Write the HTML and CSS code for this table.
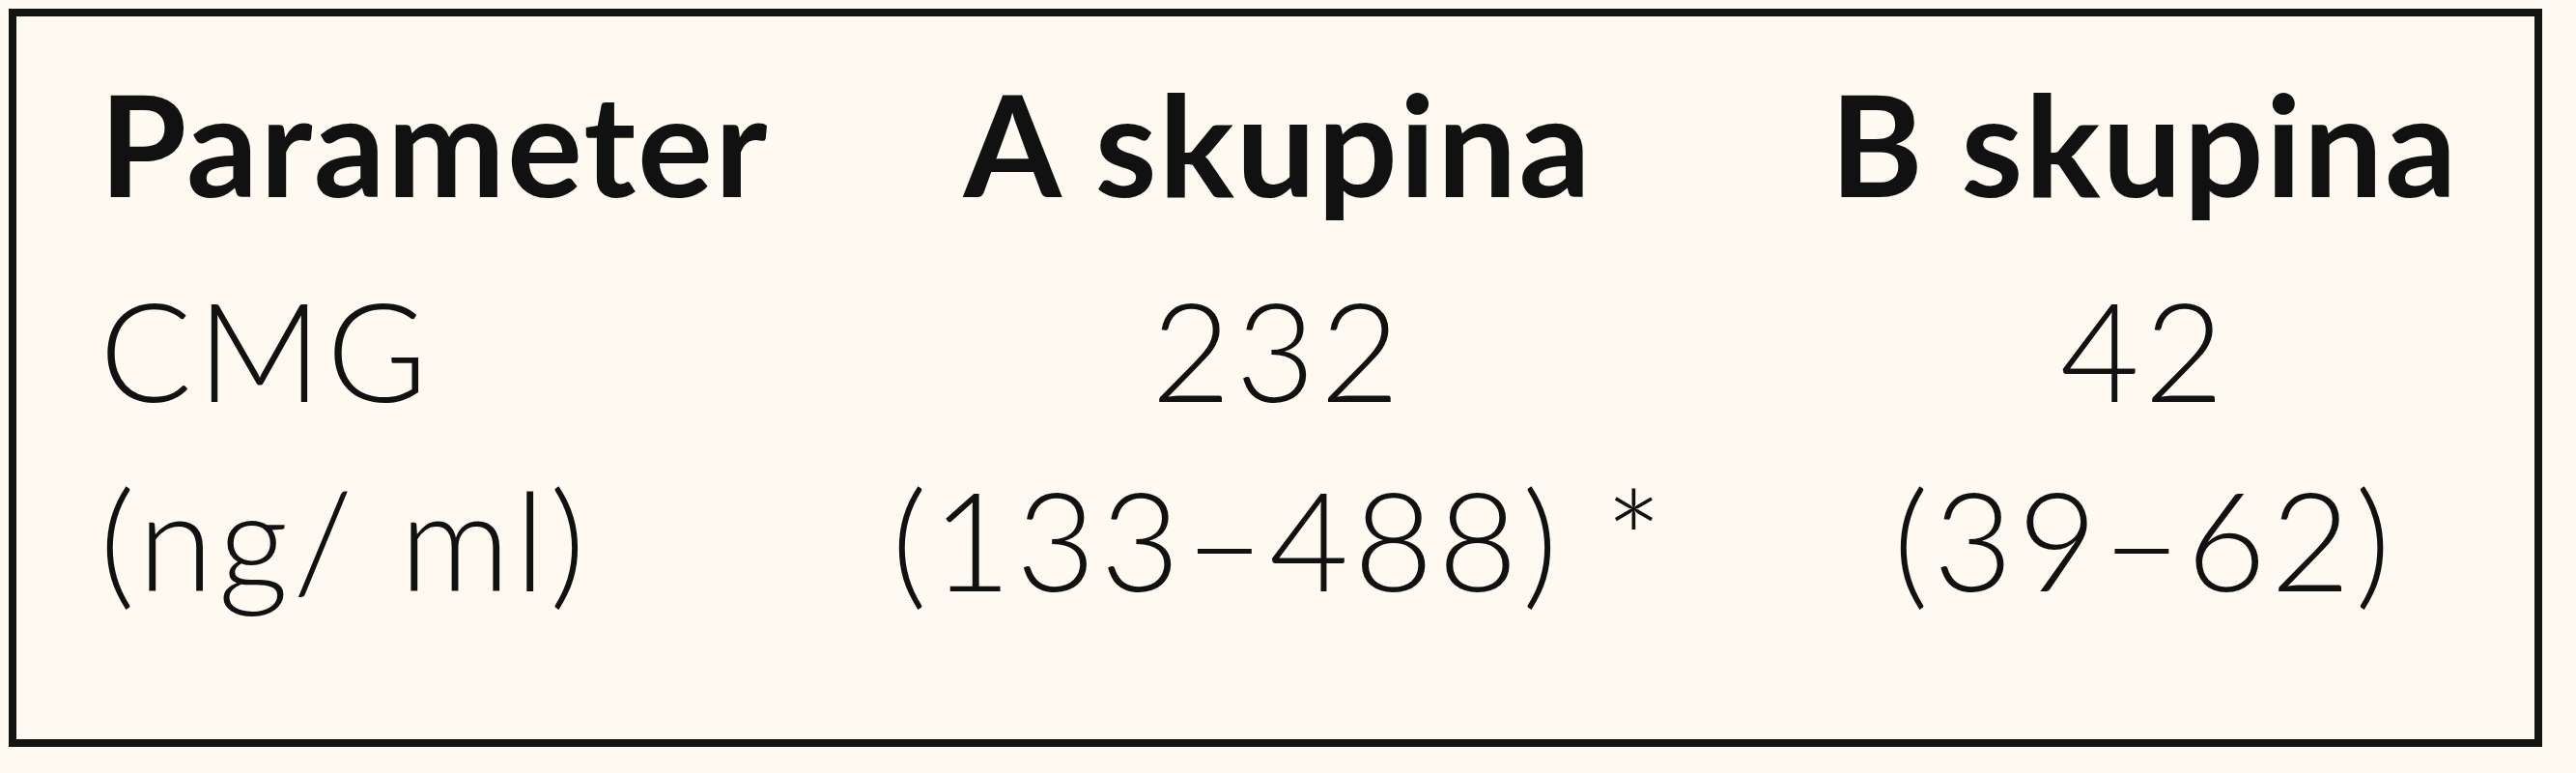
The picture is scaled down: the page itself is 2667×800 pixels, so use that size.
FILE: index.html
```html
<!DOCTYPE html>
<html lang="sl">
<head>
<meta charset="utf-8">
<title>Parameter</title>
<link rel="stylesheet" href="styles.css">
</head>
<body>
<div class="box">
  <div class="row head">
    <div class="cell first">Parameter</div>
    <div class="cell">A skupina</div>
    <div class="cell">B skupina</div>
  </div>
  <div class="row data">
    <div class="cell first">CMG</div>
    <div class="cell">232</div>
    <div class="cell">42</div>
  </div>
  <div class="row data">
    <div class="cell first">(ng/ ml)</div>
    <div class="cell">(133–488) *</div>
    <div class="cell">(39–62)</div>
  </div>
</div>
</body>
</html>
```
FILE: styles.css
```css
html, body {
  margin: 0;
  padding: 0;
  background: #fefaf2;
}
body {
  width: 2667px;
  height: 800px;
  padding: 9px;
  box-sizing: border-box;
  font-family: Lato, "Noto Sans", sans-serif;
  color: #111;
}
.box {
  box-sizing: border-box;
  width: 2623px;
  height: 764px;
  border: 8px solid #141410;
  background: #fefaf1;
  padding: 15px 0 0 86px;
}
.row {
  display: grid;
  grid-template-columns: 723px 800px 800px;
  column-gap: 97px;
}
.cell {
  text-align: center;
  white-space: nowrap;
}
.cell.first {
  text-align: left;
}
.head {
  font-weight: 700;
  font-size: 146px;
  line-height: 231px;
  letter-spacing: 2px;
}
.data {
  font-weight: 300;
  font-size: 142px;
  line-height: 196px;
  letter-spacing: 5px;
}
```
